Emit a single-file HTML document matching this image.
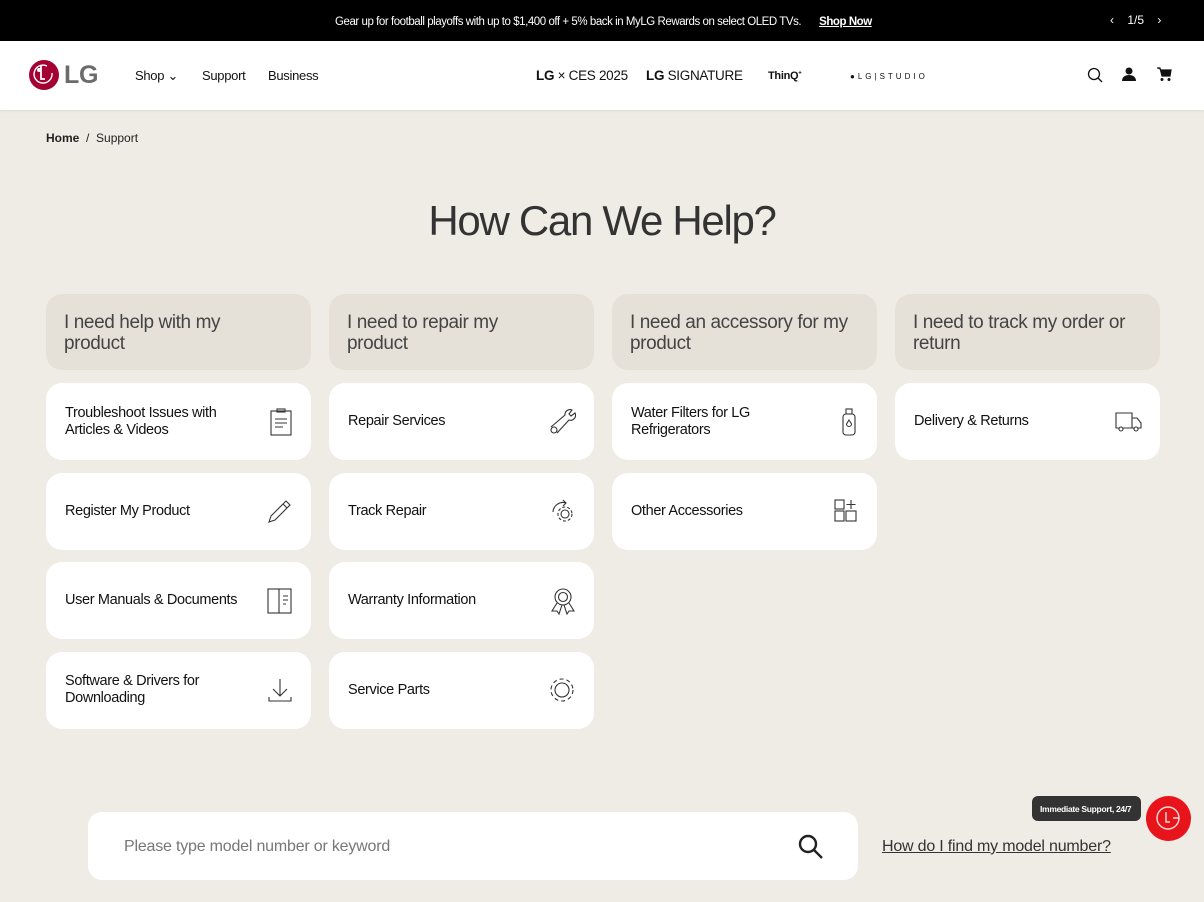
<!DOCTYPE html>
<html><head><meta charset="utf-8"><style>
*{margin:0;padding:0;box-sizing:border-box}
body{width:1204px;height:902px;overflow:hidden;background:#efebe5;font-family:"Liberation Sans",sans-serif;color:#111;position:relative}
.top{position:absolute;left:0;top:0;width:1204px;height:41px;background:#000;color:#fff;font-size:11.5px}
.top .msg{position:absolute;left:335px;top:16px;letter-spacing:-.45px}
.top .msg b{margin-left:18px;text-decoration:underline;font-weight:bold}
.top .pg{position:absolute;left:1110px;top:13px;font-size:12px;word-spacing:10px}
.nav{position:absolute;left:0;top:41px;width:1204px;height:69px;background:#fff;box-shadow:0 1px 3px rgba(0,0,0,.08)}
.nav span{position:absolute;font-size:13px;top:27px;letter-spacing:-.3px}
.bc{position:absolute;left:46px;top:131px;font-size:12px;color:#222}
h1{position:absolute;left:0;width:1204px;text-align:center;top:197px;font-size:42px;font-weight:normal;color:#333;letter-spacing:-1.3px}
.col{position:absolute;top:294px;width:265px}
.hd{height:76px;background:#e6e1d8;border-radius:16px;padding:18px 18px 0;font-size:19px;line-height:21px;color:#444;margin-bottom:13px;letter-spacing:-.4px}
.it{height:77px;background:#fff;border-radius:16px;margin-bottom:12.5px;display:flex;align-items:center;padding:0 18px 0 19px;font-size:14.5px;line-height:17px;justify-content:space-between;letter-spacing:-.35px}
.it svg{flex:none}
.search{position:absolute;left:88px;top:812px;width:770px;height:68px;background:#fff;border-radius:14px}
.search span{position:absolute;left:36px;top:26px;font-size:16px;color:#777;letter-spacing:-.2px}
.link{position:absolute;left:882px;top:838px;font-size:16px;text-decoration:underline;color:#333;letter-spacing:-.2px}
.tip{position:absolute;left:1032px;top:796px;width:109px;height:25px;background:#333;border-radius:6px;color:#fff;font-size:8.5px;font-weight:bold;padding:8px 0 0 8px;letter-spacing:-.3px}
.bub{position:absolute;left:1146px;top:796px;width:45px;height:45px;border-radius:50%;background:#e8141c}
</style></head><body>
<div class="top"><div class="msg">Gear up for football playoffs with up to $1,400 off + 5% back in MyLG Rewards on select OLED TVs.<b>Shop Now</b></div><div class="pg">‹ 1/5 ›</div></div>
<div class="nav">
<svg style="position:absolute;left:28px;top:18px" width="32" height="32" viewBox="0 0 32 32"><circle cx="16" cy="16" r="15" fill="#a50034"/><circle cx="11" cy="11" r="2" fill="#fff"/><path d="M13 7v13h4" stroke="#fff" stroke-width="1.8" fill="none"/><path d="M24 14a9 9 0 1 1-5-7" stroke="#fff" stroke-width="1.4" fill="none"/></svg>
<span style="left:64px;top:20px;font-size:25px;font-weight:bold;color:#6b6b6b">LG</span>
<span style="left:135px">Shop ⌄</span><span style="left:202px">Support</span><span style="left:268px">Business</span>
<span style="left:536px;font-size:13.5px"><b>LG</b> × CES 2025</span>
<span style="left:646px;font-size:13.5px"><b>LG</b> SIGNATURE</span>
<span style="left:768px;font-size:11px;top:29px;font-weight:bold">ThinQ<sup style="font-size:6px">+</sup></span>
<span style="left:850px;font-size:8px;top:31px;letter-spacing:3px">●LG|STUDIO</span>
<svg style="position:absolute;left:1087px;top:26px" width="16" height="16" viewBox="0 0 16 16"><circle cx="7" cy="7" r="5.5" fill="none" stroke="#111" stroke-width="1.3"/><path d="M11 11l4 4" stroke="#111" stroke-width="1.3"/></svg>
<svg style="position:absolute;left:1121px;top:25px" width="16" height="16" viewBox="0 0 16 16"><circle cx="8" cy="5" r="3.5" fill="#111"/><path d="M1 15c0-4 3-6 7-6s7 2 7 6z" fill="#111"/></svg>
<svg style="position:absolute;left:1156px;top:25px" width="16" height="16" viewBox="0 0 16 16"><path d="M1 2h3l2 8h8l1-6H5" fill="#111" stroke="#111" stroke-width="1.2"/><circle cx="6" cy="13.5" r="1.5" fill="#111"/><circle cx="13" cy="13.5" r="1.5" fill="#111"/></svg>
</div>
<div class="bc"><b>Home</b>&nbsp; / &nbsp;Support</div>
<h1>How Can We Help?</h1>
<div class="col" style="left:46px">
<div class="hd">I need help with my<br>product</div>
<div class="it">Troubleshoot Issues with<br>Articles &amp; Videos<svg width="24" height="28" viewBox="0 0 24 28" fill="none" stroke="#333" stroke-width="1.1"><rect x="2" y="3" width="20" height="24"/><rect x="8" y="1" width="8" height="3"/><path d="M6 11h12M6 15h12M6 19h8"/></svg></div>
<div class="it">Register My Product<svg width="26" height="26" viewBox="0 0 26 26" fill="none" stroke="#333" stroke-width="1.1"><path d="M2 24l2-6L19 3l4 4L8 22z M16 6l4 4"/></svg></div>
<div class="it">User Manuals &amp; Documents<svg width="26" height="26" viewBox="0 0 26 26" fill="none" stroke="#333" stroke-width="1.1"><rect x="1" y="1" width="23" height="24"/><path d="M12 1v24M16 8h5M16 12h5M16 16h3"/></svg></div>
<div class="it">Software &amp; Drivers for<br>Downloading<svg width="26" height="26" viewBox="0 0 26 26" fill="none" stroke="#333" stroke-width="1.1"><path d="M13 2v17M6 12l7 7 7-7M2 20v4h22v-4"/></svg></div>
</div>
<div class="col" style="left:329px">
<div class="hd">I need to repair my<br>product</div>
<div class="it">Repair Services<svg width="28" height="28" viewBox="0 0 28 28" fill="none" stroke="#333" stroke-width="1.1"><circle cx="6" cy="22" r="3"/><path d="M3 19L17 7a5 5 0 0 1 7-5l-3 4 2 2 4-3a5 5 0 0 1-6 7L9 25"/></svg></div>
<div class="it">Track Repair<svg width="26" height="26" viewBox="0 0 26 26" fill="none" stroke="#333" stroke-width="1.1"><circle cx="15" cy="16" r="4"/><circle cx="15" cy="16" r="7" stroke-dasharray="3 2"/><path d="M3 14a10 10 0 0 1 13-9M13 2l3 3-3 3"/></svg></div>
<div class="it">Warranty Information<svg width="26" height="28" viewBox="0 0 26 28" fill="none" stroke="#333" stroke-width="1.1"><circle cx="13" cy="10" r="8"/><circle cx="13" cy="10" r="4.5"/><path d="M7 16L2 24h5l2 3 3-9M19 16l5 8h-5l-2 3-3-9"/></svg></div>
<div class="it">Service Parts<svg width="28" height="28" viewBox="0 0 28 28" fill="none" stroke="#333" stroke-width="1.1"><circle cx="14" cy="14" r="7"/><circle cx="14" cy="14" r="11" stroke-dasharray="4 3"/></svg></div>
</div>
<div class="col" style="left:612px">
<div class="hd">I need an accessory for my<br>product</div>
<div class="it">Water Filters for LG<br>Refrigerators<svg width="20" height="30" viewBox="0 0 20 30" fill="none" stroke="#333" stroke-width="1.1"><rect x="4" y="7" width="12" height="21" rx="3"/><rect x="7" y="2" width="6" height="5"/><path d="M10 13l-2.5 4a2.5 2.5 0 0 0 5 0z"/></svg></div>
<div class="it">Other Accessories<svg width="26" height="26" viewBox="0 0 26 26" fill="none" stroke="#333" stroke-width="1.1"><rect x="2" y="2" width="9" height="9"/><rect x="2" y="13" width="9" height="10"/><rect x="13" y="13" width="10" height="10"/><path d="M18 2v9M13.5 6.5h9"/></svg></div>
</div>
<div class="col" style="left:895px">
<div class="hd">I need to track my order or<br>return</div>
<div class="it">Delivery &amp; Returns<svg width="28" height="22" viewBox="0 0 28 22" fill="none" stroke="#333" stroke-width="1.1"><path d="M2 2h16v15H2zM18 7h5l4 5v5h-9"/><circle cx="7" cy="18" r="2" fill="#fff"/><circle cx="22" cy="18" r="2" fill="#fff"/></svg></div>
</div>
<div class="search"><span>Please type model number or keyword</span>
<svg style="position:absolute;left:710px;top:22px" width="26" height="26" viewBox="0 0 26 26" fill="none" stroke="#222" stroke-width="2.4"><circle cx="10" cy="10" r="8"/><path d="M16 16l8 8"/></svg></div>
<div class="link">How do I find my model number?</div>
<div class="tip">Immediate Support, 24/7</div>
<div class="bub"><svg width="45" height="45" viewBox="0 0 45 45" fill="none" stroke="#fff" stroke-width="1.4" opacity=".85"><circle cx="22" cy="22" r="11"/><path d="M20 16v10h4M27 22h6"/></svg></div>
</body></html>
